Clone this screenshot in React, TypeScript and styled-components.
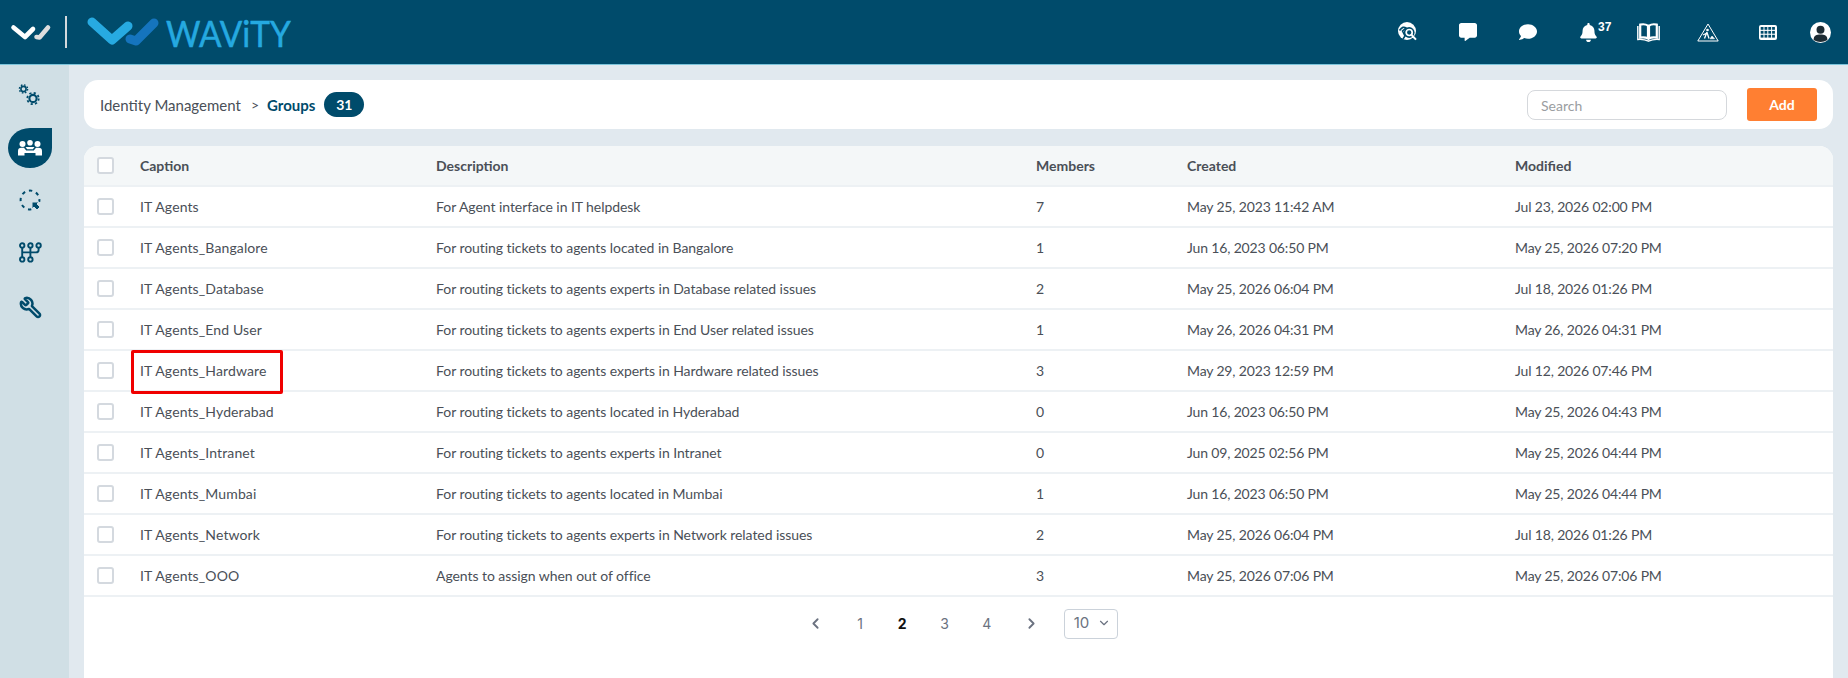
import React from "react";
import styled, { createGlobalStyle } from "styled-components";
import { ChevronLeft, ChevronRight, ChevronDown, Wrench } from "lucide-react";
import { FaBell, FaComment, FaCommentAlt } from "react-icons/fa";

const NAVY = "#004b6b";

const Global = createGlobalStyle`
  html, body { margin: 0; padding: 0; height: 100%; overflow: hidden; }
  body { font-family: "Lato", "Liberation Sans", sans-serif; background: #e1e9ef; color: #444c56; }
  * { box-sizing: border-box; }
`;

const Page = styled.div`
  display: flex;
  flex-direction: column;
  width: 1848px;
  height: 678px;
`;

const TopBar = styled.header`
  flex: none;
  display: flex;
  align-items: center;
  height: 65px;
  padding-left: 10px;
  background: ${NAVY};
  border-bottom: 1px solid #7cc4da;
`;

const LogoDivider = styled.span`
  width: 2px;
  height: 32px;
  margin: 0 19px 0 13px;
  background: #d4d9dc;
`;

const Wordmark = styled.span`
  margin-left: 4px;
  font-size: 37px;
  line-height: 1;
  color: #25a9e0;
  -webkit-text-stroke: 0.5px #25a9e0;
  transform: scaleX(0.9);
  transform-origin: left center;
`;

const TopIcons = styled.nav`
  display: flex;
  align-items: center;
  margin-left: auto;
  padding-right: 6px;
  color: #fff;
`;

const TopIconSlot = styled.span<{ $w?: number }>`
  position: relative;
  display: flex;
  align-items: center;
  justify-content: center;
  width: ${(p) => p.$w ?? 60}px;
  height: 32px;
`;

const BellCount = styled.sup`
  position: absolute;
  top: 5px;
  left: 40px;
  font-size: 12px;
  font-weight: 700;
  line-height: 1;
  font-family: "Liberation Sans", sans-serif;
`;

const Body = styled.div`
  flex: 1;
  display: flex;
  min-height: 0;
`;

const SideBar = styled.aside`
  flex: none;
  display: flex;
  flex-direction: column;
  align-items: stretch;
  gap: 12px;
  width: 69px;
  padding: 11px 13px 0 8px;
  background: #d0dfe5;
  color: ${NAVY};
`;

const SideItem = styled.div<{ $active?: boolean }>`
  display: flex;
  align-items: center;
  justify-content: center;
  height: 40px;
  width: 44px;
  border-radius: 50% 0 50% 50%;
  background: ${(p) => (p.$active ? NAVY : "transparent")};
  color: ${(p) => (p.$active ? "#fff" : NAVY)};
  &:last-child { margin-top: 3px; }
`;

const FlippedWrench = styled(Wrench)`
  transform: scaleX(-1);
`;

const Main = styled.main`
  flex: 1;
  display: flex;
  flex-direction: column;
  gap: 17px;
  min-width: 0;
  padding: 15px 15px 0;
`;

const TitleBar = styled.section`
  flex: none;
  display: flex;
  align-items: center;
  height: 49px;
  padding: 0 16px;
  background: #fff;
  border-radius: 14px;
`;

const Crumb = styled.span`
  font-size: 15px;
  color: #4a5058;
`;

const CrumbSep = styled.span`
  margin: 0 8px 0 10px;
  font-size: 14px;
  color: #4a5058;
`;

const CrumbCurrent = styled.strong`
  font-size: 15px;
  font-weight: 700;
  color: ${NAVY};
`;

const CountBadge = styled.span`
  display: flex;
  align-items: center;
  justify-content: center;
  width: 40px;
  height: 25px;
  margin-left: 9px;
  border-radius: 13px;
  background: ${NAVY};
  color: #fff;
  font-size: 14px;
  font-weight: 700;
`;

const SearchInput = styled.input`
  width: 200px;
  height: 30px;
  margin-left: auto;
  padding: 2px 13px 0;
  border: 1px solid #d5d8dc;
  border-radius: 8px;
  background: #fff;
  font: 14px "Lato", sans-serif;
  outline: none;
  &::placeholder { color: #9a9da1; opacity: 1; }
`;

const AddButton = styled.button`
  width: 70px;
  height: 33px;
  margin-left: 20px;
  border: 0;
  border-radius: 3px;
  background: #ff7f32;
  color: #fff;
  font: 700 14px "Lato", sans-serif;
`;

const TableCard = styled.section`
  flex: 1;
  background: #fff;
  border-radius: 14px 14px 0 0;
  overflow: hidden;
`;

const Row = styled.div<{ $head?: boolean }>`
  display: grid;
  grid-template-columns: 43px 296px 600px 151px 328px 1fr;
  align-items: center;
  height: 41px;
  padding-left: 13px;
  border-bottom: 2px solid #edf1f4;
  background: ${(p) => (p.$head ? "#f4f7f8" : "#fff")};
  font-size: 14px;
  font-weight: ${(p) => (p.$head ? 700 : 400)};
  color: #4a4f57;
`;

const Check = styled.span`
  display: block;
  width: 17px;
  height: 17px;
  border: 2px solid #d4d9df;
  border-radius: 3px;
  background: #fff;
`;

const CaptionCell = styled.span`
  position: relative;
  letter-spacing: 0.12px;
`;

const DescCell = styled.span`
  letter-spacing: -0.055px;
`;

const DateCell = styled.span`
  letter-spacing: -0.16px;
`;

const Highlight = styled.span`
  position: absolute;
  left: -9px;
  top: -12px;
  width: 152px;
  height: 44px;
  border: 3px solid #f00000;
  border-radius: 2px;
`;

const Pager = styled.nav`
  display: flex;
  align-items: center;
  height: 53px;
  padding-left: 722px;
  font-family: "Inter", "Liberation Sans", sans-serif;
  font-size: 14px;
  color: #6b7280;
`;

const PageArrow = styled.span`
  display: flex;
  align-items: center;
  justify-content: center;
  width: 18px;
`;

const PageList = styled.span`
  display: flex;
  margin: 0 15px 0 15px;
`;

const PageNum = styled.span<{ $active?: boolean }>`
  width: 42.2px;
  text-align: center;
  font-weight: ${(p) => (p.$active ? 700 : 400)};
  color: ${(p) => (p.$active ? "#111" : "#6b7280")};
`;

const PageSize = styled.span`
  display: flex;
  align-items: center;
  justify-content: space-between;
  width: 54px;
  height: 30px;
  margin-left: 23px;
  padding: 0 6px 2px 9px;
  border: 1px solid #cbd2da;
  border-radius: 4px;
  color: #6b7280;
  font-size: 15px;
`;

const SmallLogo = () => (
  <svg width="42" height="20" viewBox="0 0 42 20" fill="none" strokeLinejoin="round" strokeLinecap="round">
    <path d="M3.5 5.5 L15 15 L23 7" stroke="#fff" strokeWidth="4.6" />
    <path d="M26.5 15 L29.5 15.5 L38 5.5" stroke="#dedede" strokeWidth="4.6" />
  </svg>
);

const BigLogo = () => (
  <svg width="76" height="32" viewBox="0 0 76 32" fill="none" strokeLinejoin="round" strokeLinecap="round">
    <path d="M6 6 L26 24 L42 10" stroke="#27aae1" strokeWidth="9" />
    <path d="M44 23 L50 25 L68 7" stroke="#1574bd" strokeWidth="9" />
  </svg>
);

const GlobeSearch = () => (
  <svg width="20" height="20" viewBox="0 0 20 20">
    <circle cx="9" cy="9" r="9" fill="#fff" />
    <path d="M1.5 8.5 C4 5 6 4.5 8 6 L4.5 9 L7 14 L5 17" fill="none" stroke={NAVY} strokeWidth="1.6" />
    <circle cx="11.2" cy="10.5" r="5.4" fill={NAVY} />
    <circle cx="11.2" cy="10.5" r="3" fill="none" stroke="#fff" strokeWidth="1.7" />
    <path d="M13.6 13 L18 17.6" stroke="#fff" strokeWidth="2" />
  </svg>
);

const BookIcon = () => (
  <svg width="23" height="19" viewBox="0 0 23 19" fill="none" stroke="#fff">
    <path d="M3.2 1.6 Q8 0.6 11 2.6 V15.5 Q8 13.8 3.2 14.6 Z" strokeWidth="2.2" />
    <path d="M19.8 1.6 Q15 0.6 12 2.6 V15.5 Q15 13.8 19.8 14.6 Z" strokeWidth="2.2" />
    <path d="M0.8 3 V16.5 Q7 16 11.5 18.2 Q16 16 22.2 16.5 V3" strokeWidth="1.4" />
  </svg>
);

const WorkSign = () => (
  <svg width="22" height="19" viewBox="0 0 22 19" fill="none" stroke="#fff">
    <path d="M11 1 L21.2 18 H0.8 Z" strokeWidth="1" strokeLinejoin="round" />
    <circle cx="10.5" cy="7" r="1.3" fill="#fff" stroke="none" />
    <path d="M10 9 L7.5 15.5 M10 9.5 L12 15.5 M10 10 L6 12" strokeWidth="1.3" />
    <path d="M13 15.8 L15 13 L17.5 15.8 Z" fill="#fff" strokeWidth="0.6" />
  </svg>
);

const GridIcon = () => (
  <svg width="18" height="15" viewBox="0 0 18 15">
    <rect width="18" height="15" rx="2" fill="#fff" />
    {[0, 1, 2].flatMap((r) =>
      [0, 1, 2, 3].map((c) => (
        <rect key={`${r}-${c}`} x={1.7 + c * 3.8} y={2 + r * 3.9} width="2.8" height="2.8" fill={NAVY} />
      ))
    )}
  </svg>
);

const UserIcon = () => (
  <svg width="21" height="21" viewBox="0 0 21 21">
    <circle cx="10.5" cy="10.5" r="10.5" fill="#fff" />
    <circle cx="10.5" cy="7.8" r="4" fill="#1d2b33" />
    <path d="M3.6 18 C3.6 13 6.5 12.4 10.5 12.4 C14.5 12.4 17.4 13 17.4 18 Q10.5 22 3.6 18 Z" fill="#1d2b33" />
  </svg>
);

const Gears = () => (
  <svg width="24" height="24" viewBox="0 0 24 24" fill="none" stroke={NAVY}>
    <circle cx="5.5" cy="5" r="2.6" strokeWidth="1.6" />
    <circle cx="5.5" cy="5" r="4.1" strokeWidth="1.4" strokeDasharray="1.6 1.62" />
    <circle cx="15" cy="14.5" r="3.6" strokeWidth="2.1" />
    <circle cx="15" cy="14.5" r="5.7" strokeWidth="1.8" strokeDasharray="2.2 2.28" />
  </svg>
);

const TeamIcon = () => (
  <svg width="24" height="16" viewBox="0 0 24 16" fill="#fff">
    <circle cx="4.5" cy="4" r="3" />
    <circle cx="12" cy="2.8" r="2.8" />
    <circle cx="19.5" cy="4" r="3" />
    <path d="M0 15.5 V11 Q0 7.8 3.5 7.8 H6 L8.2 10.6 H15.8 L18 7.8 H20.5 Q24 7.8 24 11 V15.5 H17.5 V13 H6.5 V15.5 Z" />
    <path d="M7.5 7 H16.5 L14.8 9.3 H9.2 Z" />
  </svg>
);

const DashedCursor = () => (
  <svg width="22" height="22" viewBox="0 0 22 22" fill="none" stroke={NAVY}>
    <circle cx="11" cy="11" r="9.4" strokeWidth="2" strokeDasharray="3.4 4" strokeDashoffset="1.5" />
    <path
      d="M13 13 H20 L18 15 L21 18 L18 21 L15 18 L13 20 Z"
      fill={NAVY}
      stroke="#d0dfe5"
      strokeWidth="1"
    />
  </svg>
);

const GearShift = () => (
  <svg width="23" height="21" viewBox="0 0 23 21" fill="none" stroke={NAVY} strokeWidth="1.9">
    <circle cx="3.2" cy="3.4" r="2.2" />
    <circle cx="11.4" cy="3.4" r="2.2" />
    <circle cx="19.6" cy="3.4" r="2.2" />
    <circle cx="3.2" cy="17.4" r="2.2" />
    <circle cx="11.4" cy="17.4" r="2.2" />
    <path d="M3.2 5.6 V15.2 M11.4 5.6 V15.2 M19.6 5.6 V8 Q19.6 10.4 17 10.4 H3.2" />
  </svg>
);

const rows = [
  ["IT Agents", "For Agent interface in IT helpdesk", "7", "May 25, 2023 11:42 AM", "Jul 23, 2026 02:00 PM"],
  ["IT Agents_Bangalore", "For routing tickets to agents located in Bangalore", "1", "Jun 16, 2023 06:50 PM", "May 25, 2026 07:20 PM"],
  ["IT Agents_Database", "For routing tickets to agents experts in Database related issues", "2", "May 25, 2026 06:04 PM", "Jul 18, 2026 01:26 PM"],
  ["IT Agents_End User", "For routing tickets to agents experts in End User related issues", "1", "May 26, 2026 04:31 PM", "May 26, 2026 04:31 PM"],
  ["IT Agents_Hardware", "For routing tickets to agents experts in Hardware related issues", "3", "May 29, 2023 12:59 PM", "Jul 12, 2026 07:46 PM"],
  ["IT Agents_Hyderabad", "For routing tickets to agents located in Hyderabad", "0", "Jun 16, 2023 06:50 PM", "May 25, 2026 04:43 PM"],
  ["IT Agents_Intranet", "For routing tickets to agents experts in Intranet", "0", "Jun 09, 2025 02:56 PM", "May 25, 2026 04:44 PM"],
  ["IT Agents_Mumbai", "For routing tickets to agents located in Mumbai", "1", "Jun 16, 2023 06:50 PM", "May 25, 2026 04:44 PM"],
  ["IT Agents_Network", "For routing tickets to agents experts in Network related issues", "2", "May 25, 2026 06:04 PM", "Jul 18, 2026 01:26 PM"],
  ["IT Agents_OOO", "Agents to assign when out of office", "3", "May 25, 2026 07:06 PM", "May 25, 2026 07:06 PM"],
];

export default function App() {
  return (
    <Page>
      <Global />
      <TopBar>
        <SmallLogo />
        <LogoDivider />
        <BigLogo />
        <Wordmark>WAViTY</Wordmark>
        <TopIcons>
          <TopIconSlot><GlobeSearch /></TopIconSlot>
          <TopIconSlot><FaCommentAlt size={18} /></TopIconSlot>
          <TopIconSlot><FaComment size={18} /></TopIconSlot>
          <TopIconSlot><FaBell size={19} /><BellCount>37</BellCount></TopIconSlot>
          <TopIconSlot><BookIcon /></TopIconSlot>
          <TopIconSlot><WorkSign /></TopIconSlot>
          <TopIconSlot><GridIcon /></TopIconSlot>
          <TopIconSlot $w={44}><UserIcon /></TopIconSlot>
        </TopIcons>
      </TopBar>
      <Body>
        <SideBar>
          <SideItem><Gears /></SideItem>
          <SideItem $active><TeamIcon /></SideItem>
          <SideItem><DashedCursor /></SideItem>
          <SideItem><GearShift /></SideItem>
          <SideItem><FlippedWrench size={23} strokeWidth={2.6} /></SideItem>
        </SideBar>
        <Main>
          <TitleBar>
            <Crumb>Identity Management</Crumb>
            <CrumbSep>&gt;</CrumbSep>
            <CrumbCurrent>Groups</CrumbCurrent>
            <CountBadge>31</CountBadge>
            <SearchInput placeholder="Search" />
            <AddButton>Add</AddButton>
          </TitleBar>
          <TableCard>
            <Row $head>
              <Check />
              <span>Caption</span>
              <span>Description</span>
              <span>Members</span>
              <span>Created</span>
              <span>Modified</span>
            </Row>
            {rows.map((r) => (
              <Row key={r[0]}>
                <Check />
                <CaptionCell>
                  {r[0]}
                  {r[0] === "IT Agents_Hardware" && <Highlight />}
                </CaptionCell>
                <DescCell>{r[1]}</DescCell>
                <span>{r[2]}</span>
                <DateCell>{r[3]}</DateCell>
                <DateCell>{r[4]}</DateCell>
              </Row>
            ))}
            <Pager>
              <PageArrow><ChevronLeft size={17} strokeWidth={2.6} /></PageArrow>
              <PageList>
                <PageNum>1</PageNum>
                <PageNum $active>2</PageNum>
                <PageNum>3</PageNum>
                <PageNum>4</PageNum>
              </PageList>
              <PageArrow><ChevronRight size={17} strokeWidth={2.6} /></PageArrow>
              <PageSize>10<ChevronDown size={14} strokeWidth={2} /></PageSize>
            </Pager>
          </TableCard>
        </Main>
      </Body>
    </Page>
  );
}
